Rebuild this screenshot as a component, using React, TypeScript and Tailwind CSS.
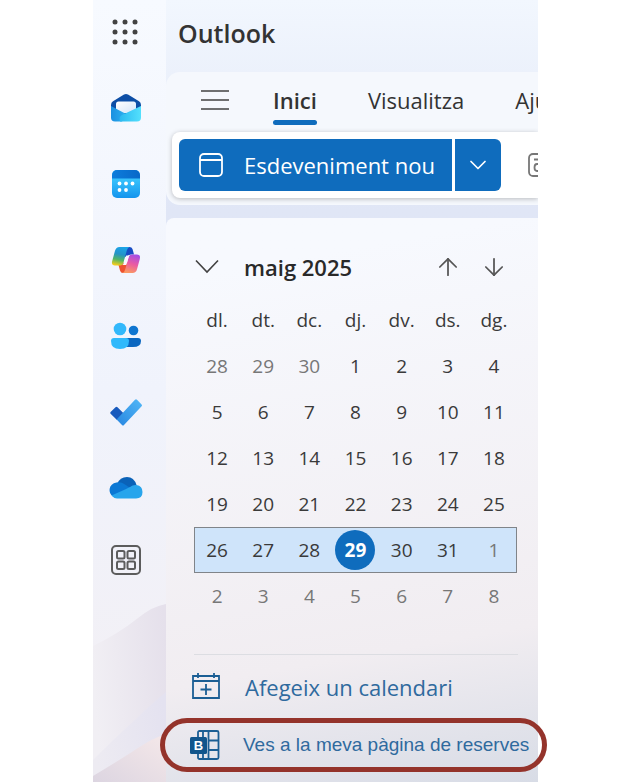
import { ArrowDown, ArrowUp, ChevronDown } from 'lucide-react'

const weekdays = ['dl.', 'dt.', 'dc.', 'dj.', 'dv.', 'ds.', 'dg.']

const weeks = [
  [28, 29, 30, 1, 2, 3, 4],
  [5, 6, 7, 8, 9, 10, 11],
  [12, 13, 14, 15, 16, 17, 18],
  [19, 20, 21, 22, 23, 24, 25],
  [26, 27, 28, 29, 30, 31, 1],
  [2, 3, 4, 5, 6, 7, 8],
]

const currentWeek = 4
const today = 29

function isOtherMonth(week: number, day: number) {
  return (week === 0 && day > 20) || (week >= 4 && day < 10)
}

function WaffleIcon() {
  return (
    <svg width="28" height="28" viewBox="0 0 28 28" fill="#424242">
      {[4, 14, 24].map((y) => [4, 14, 24].map((x) => <circle key={`${x}-${y}`} cx={x} cy={y} r="2.5" />))}
    </svg>
  )
}

function MailIcon() {
  return (
    <svg width="32" height="30" viewBox="0 0 32 30">
      <defs>
        <linearGradient id="mail-flap" x1="0" x2="1" y1="0" y2="0">
          <stop offset="0" stopColor="#1b8fe0" />
          <stop offset="1" stopColor="#2fb4f2" />
        </linearGradient>
        <linearGradient id="mail-front" x1="0" x2="1" y1="0" y2="0">
          <stop offset="0" stopColor="#2bb9f0" />
          <stop offset="1" stopColor="#54e0fd" />
        </linearGradient>
        <linearGradient id="mail-paper" x1="0" x2="1" y1="0" y2="1">
          <stop offset="0" stopColor="#ffffff" />
          <stop offset="1" stopColor="#d5e4f8" />
        </linearGradient>
      </defs>
      <path d="M1 12Q1 9.500 3 8.300L14 1.500Q16 .4 18 1.500L29 8.300Q31 9.500 31 12V16L16 24 1 16Z" fill="#0d4ea6" />
      <path d="M6 11Q6 8.500 8.500 8.500H23.500Q26 8.500 26 11V20H6Z" fill="url(#mail-paper)" />
      <path d="M1 13L17 21.500 12 28.500H5Q1 28.500 1 24.500Z" fill="url(#mail-flap)" />
      <path d="M31 13V24.500Q31 28.500 27 28.500H10Q8.500 23.500 12.500 21.800Z" fill="url(#mail-front)" />
    </svg>
  )
}

function CalendarIcon() {
  return (
    <svg width="28" height="28" viewBox="0 0 28 28">
      <defs>
        <linearGradient id="cal-body" x1="0" x2="0" y1="0" y2="1">
          <stop offset="0.2" stopColor="#3ecbff" />
          <stop offset="1" stopColor="#1494ed" />
        </linearGradient>
        <linearGradient id="cal-top" x1="0" x2="1" y1="0" y2="0">
          <stop offset="0" stopColor="#0d7ddc" />
          <stop offset="1" stopColor="#0868c8" />
        </linearGradient>
      </defs>
      <rect width="28" height="28" rx="5" fill="url(#cal-body)" />
      <path d="M0 8.500V5A5 5 0 0 1 5 0H23A5 5 0 0 1 28 5V8.500Z" fill="url(#cal-top)" />
      <g fill="#fff">
        <circle cx="7.500" cy="13.500" r="1.900" />
        <circle cx="14" cy="13.500" r="1.900" />
        <circle cx="20.500" cy="13.500" r="1.900" />
        <circle cx="7.500" cy="20" r="1.900" />
        <circle cx="14" cy="20" r="1.900" />
      </g>
    </svg>
  )
}

function CopilotIcon() {
  return (
    <svg width="30" height="28" viewBox="0 0 30 28">
      <defs>
        <linearGradient id="cop-left" x1="0.600" x2="0.400" y1="0" y2="1">
          <stop offset="0" stopColor="#1ba4e8" />
          <stop offset="0.400" stopColor="#2493c8" />
          <stop offset="0.700" stopColor="#52b565" />
          <stop offset="1" stopColor="#f2cc1d" />
        </linearGradient>
        <linearGradient id="cop-right" x1="0.700" x2="0.400" y1="0" y2="1">
          <stop offset="0" stopColor="#a34fe6" />
          <stop offset="0.500" stopColor="#ea5aa3" />
          <stop offset="1" stopColor="#fb9962" />
        </linearGradient>
      </defs>
      <path d="M14 1H18.500Q20.800 1 21.500 3L23 8.500H20Q17 8.500 16 11.500L13 10Z" fill="#174cc4" />
      <path d="M7.500 19L9 24.500Q9.700 27 12 27H15L17 18 12.500 16.500Q11.800 19 9.500 19Z" fill="#ee5330" />
      <path d="M8.500 1H18.500Q16.600 1.500 15.800 4.500L12.500 16.500Q11.700 19.500 9 19.500H4Q0 19.500 1.200 15L4 4.800Q5 1 8.500 1Z" fill="url(#cop-left)" />
      <path d="M21.500 27H11.500Q13.400 26.500 14.200 23.500L17.500 11.500Q18.300 8.500 21 8.500H26Q30 8.500 28.800 13L26 23.200Q25 27 21.500 27Z" fill="url(#cop-right)" />
      <path d="M15.200 9.500H18.500Q17.800 10.300 17.400 11.700L15.200 19H11.900Q12.400 18 12.700 17Z" fill="#fbf6fd" />
    </svg>
  )
}

function PeopleIcon() {
  return (
    <svg width="32" height="28" viewBox="0 0 32 28">
      <circle cx="23.500" cy="8.500" r="4.800" fill="#0f75d0" />
      <path d="M15 16H28Q31 16 31 19 31 25 23 25H16Z" fill="#0b67c0" />
      <circle cx="10" cy="7" r="6.300" fill="#32b8fb" />
      <path d="M4 16H16Q19 16 19 19 19 27 10 27 1 27 1 19 1 16 4 16Z" fill="#30b9fb" />
    </svg>
  )
}

function TodoIcon() {
  return (
    <svg width="34" height="28" viewBox="0 0 34 28">
      <defs>
        <linearGradient id="todo" x1="0" x2="1" y1="1" y2="0">
          <stop offset="0" stopColor="#2886e0" />
          <stop offset="1" stopColor="#52b8f7" />
        </linearGradient>
      </defs>
      <path d="M1.600 14L6.500 9.200Q7.500 8.200 8.500 9.200L15 15.700 8 22 1.600 15.800Q.8 14.900 1.600 14Z" fill="#185abd" />
      <path d="M7.600 21.500L26 1.800Q27 .8 28 1.800L32.600 6.400Q33.500 7.300 32.600 8.300L15 27Q14 28 13 27Z" fill="url(#todo)" />
    </svg>
  )
}

function OneDriveIcon() {
  return (
    <svg width="34" height="24" viewBox="0 0 34 24">
      <path d="M8 8Q11 1 18 1 25 1 27.500 9L18 14Z" fill="#0a62b8" />
      <path d="M7.500 6.500Q12 5.500 16 8.500L22 12.500 4 20.500Q0 18 .6 13 1.500 7.500 7.500 6.500Z" fill="#0b78d4" />
      <path d="M16 13.500L21 11Q24 8.500 27.500 9 33.500 10 33.500 16 33.500 22.500 27 22.500H8Q5 22.500 2.500 19.500Z" fill="#28a5ec" />
    </svg>
  )
}

function AppsIcon() {
  return (
    <svg width="32" height="32" viewBox="0 0 32 32" fill="none" stroke="#5c5c5c" strokeWidth="2">
      <rect x="2" y="2" width="28" height="28" rx="4" />
      <rect x="7" y="7" width="7.500" height="7.500" rx="1.500" />
      <rect x="17.500" y="7" width="7.500" height="7.500" rx="1.500" />
      <rect x="7" y="17.500" width="7.500" height="7.500" rx="1.500" />
      <rect x="17.500" y="17.500" width="7.500" height="7.500" rx="1.500" />
    </svg>
  )
}

function EventIcon() {
  return (
    <svg width="26" height="26" viewBox="0 0 26 26" fill="none" stroke="currentColor" strokeWidth="1.800">
      <rect x="2" y="2" width="22" height="22" rx="4" />
      <path d="M2 8H24" />
    </svg>
  )
}

function SaveIcon() {
  return (
    <svg width="26" height="26" viewBox="0 0 26 26" fill="none" stroke="#777" strokeWidth="1.800">
      <rect x="2" y="2" width="22" height="22" rx="4" />
      <path d="M7 7.500H19M18 12H10Q7.500 12 7.500 15.500 7.500 19 10 19H18" />
    </svg>
  )
}

function AddCalendarIcon() {
  return (
    <svg className="shrink-0" width="28" height="28" viewBox="0 0 28 28" fill="none" stroke="#1b5e94" strokeWidth="1.800">
      <path d="M1 3H27V25H1ZM1 8H27M6 0V5M22 0V5M14 11V22M8.500 16.500H19.500" />
    </svg>
  )
}

function BookingsIcon() {
  return (
    <svg className="shrink-0" width="30" height="30" viewBox="0 0 30 30">
      <g fill="none" stroke="#1b5e94" strokeWidth="1.800">
        <rect x="8" y="1" width="20.500" height="28" rx="1.500" />
        <path d="M13 1V29M18.500 1V29M18.500 10.500H28.500M18.500 20H28.500" />
      </g>
      <rect x="0" y="7" width="17" height="17" rx="1.500" fill="#11558c" />
      <text x="8.500" y="20" textAnchor="middle" fontSize="13" fontWeight="700" fontFamily="Liberation Sans, sans-serif" fill="#fff">
        B
      </text>
    </svg>
  )
}

const apps = [
  { label: 'Correu', icon: <MailIcon /> },
  { label: 'Calendari', icon: <CalendarIcon /> },
  { label: 'Copilot', icon: <CopilotIcon /> },
  { label: 'Persones', icon: <PeopleIcon /> },
  { label: 'To Do', icon: <TodoIcon /> },
  { label: 'OneDrive', icon: <OneDriveIcon /> },
]

function AppRail() {
  return (
    <nav className="relative flex w-[73px] shrink-0 flex-col bg-linear-to-b from-[#f7faff] via-[#f0f3fc] via-50% to-[#f3eff3]">
      {/* Wallpaper hills at the foot of the rail */}
      <svg className="absolute bottom-0 left-0 h-[182px] w-full" viewBox="0 0 73 182" preserveAspectRatio="none">
        <defs>
          <linearGradient id="hill" x1="0" x2="1" y1="0.400" y2="0.200">
            <stop offset="0" stopColor="#f1eff4" />
            <stop offset="1" stopColor="#e5e0eb" />
          </linearGradient>
          <linearGradient id="slope" x1="0" x2="1" y1="0.500" y2="0.300">
            <stop offset="0" stopColor="#edebf2" />
            <stop offset="1" stopColor="#e4e2f0" />
          </linearGradient>
          <linearGradient id="dune" x1="0" x2="1" y1="1" y2="0">
            <stop offset="0" stopColor="#dcd5e1" />
            <stop offset="1" stopColor="#f5e8e9" />
          </linearGradient>
        </defs>
        <path d="M0 46Q25 34 45 18 60 6 73 4V182H0Z" fill="url(#hill)" />
        <path d="M0 160Q24 136 42 120 58 104 73 92V182H0Z" fill="url(#slope)" />
        <path d="M0 176Q30 158 45 148 60 138 73 134V182H0Z" fill="url(#dune)" />
      </svg>
      <button aria-label="Iniciador d'aplicacions" className="relative flex h-[70px] items-center justify-center pr-2.5 pb-1.5">
        <WaffleIcon />
      </button>
      {apps.map((app) => (
        <button key={app.label} aria-label={app.label} className="relative flex h-[76px] items-center justify-center pr-2">
          {app.icon}
        </button>
      ))}
      <button aria-label="Més aplicacions" className="relative flex h-[68px] items-center justify-center pr-2">
        <AppsIcon />
      </button>
    </nav>
  )
}

function Ribbon() {
  return (
    <div className="overflow-hidden rounded-l-[14px] bg-[#f5f8fd] pb-[7px] pl-1.5 whitespace-nowrap text-[#333]">
      <div className="flex h-[60px] items-start pt-2 pl-7">
        <button aria-label="Menú" className="flex h-10 w-[30px] items-center justify-center">
          <svg width="30" height="22" viewBox="0 0 30 22" stroke="#424242" strokeWidth="1.600">
            <path d="M1 2H29M1 11H29M1 20H29" />
          </svg>
        </button>
        <div role="tablist" className="ml-[43px] flex gap-[51px] text-[22px] leading-10">
          <button role="tab" aria-selected="true" className="flex flex-col font-semibold">
            Inici
            <span className="h-[5px] w-full rounded-full bg-[#0f6cbd]" />
          </button>
          <button role="tab" aria-selected="false" className="flex">Visualitza</button>
          <button role="tab" aria-selected="false" className="flex">Ajuda</button>
        </div>
      </div>
      <div className="flex h-[66px] items-center rounded-l-lg bg-white pl-[7px] shadow-[0_1px_5px_rgba(0,0,0,0.25)]">
        <button className="flex h-[52px] w-[273px] shrink-0 items-center gap-5 rounded-l-md bg-[#0f6cbd] pl-[19px] text-[22px] text-white">
          <EventIcon />
          Esdeveniment nou
        </button>
        <button aria-label="Més opcions" className="ml-[3px] flex h-[52px] w-[46px] shrink-0 items-center justify-center rounded-r-md bg-[#0f6cbd] text-white">
          <ChevronDown size={28} strokeWidth={1.5} />
        </button>
        <button aria-label="Desa" className="ml-[26px] shrink-0">
          <SaveIcon />
        </button>
      </div>
    </div>
  )
}

function MonthPicker() {
  return (
    <section className="w-[323px]">
      <div className="mb-2 flex h-11 items-center">
        <button aria-label="Redueix" className="mr-6 flex justify-center">
          <svg width="26" height="16" viewBox="0 0 26 16" fill="none" stroke="#424242" strokeWidth="1.600">
            <path d="M2 1.500L13 13 24 1.500" />
          </svg>
        </button>
        <h2 className="flex-1 text-[22px] font-semibold text-[#292929]">maig 2025</h2>
        <button aria-label="Mes anterior" className="flex w-[46px] justify-center text-[#555]">
          <ArrowUp size={28} strokeWidth={1.5} />
        </button>
        <button aria-label="Mes següent" className="flex w-[46px] justify-center text-[#555]">
          <ArrowDown size={28} strokeWidth={1.5} />
        </button>
      </div>
      <table className="w-full table-fixed border-collapse text-center text-[19px] text-[#3a3a3a]">
        <thead>
          <tr className="h-[46px]">
            {weekdays.map((day) => (
              <th key={day} className="p-0 font-normal">{day}</th>
            ))}
          </tr>
        </thead>
        <tbody>
          {weeks.map((week, i) => (
            <tr key={i} className={i === currentWeek ? 'h-[46px] bg-[#cfe4fa] outline outline-1 -outline-offset-1 outline-[#808489]' : 'h-[46px]'}>
              {week.map((day) => (
                <td key={day} className="p-0">
                  {i === currentWeek && day === today ? (
                    <button aria-current="date" className="mx-auto flex size-10 items-center justify-center rounded-full bg-[#0f6cbd] font-bold text-white">
                      {day}
                    </button>
                  ) : (
                    <button className={isOtherMonth(i, day) ? 'text-[#777]' : ''}>{day}</button>
                  )}
                </td>
              ))}
            </tr>
          ))}
        </tbody>
      </table>
    </section>
  )
}

export default function App() {
  return (
    <div className="min-h-screen bg-white px-[93px] font-['Open_Sans','Noto_Sans',sans-serif]">
      <div className="flex min-h-screen">
        <AppRail />
        <main className="flex min-w-0 flex-1 flex-col bg-linear-to-b from-[#f2f7fe] via-[#e0e6f6] via-[210px] to-[#eae6ef]">
          <header className="flex h-[72px] items-center pb-1 pl-3">
            <h1 className="text-[25px] font-semibold text-[#333]">Outlook</h1>
          </header>
          <Ribbon />
          <aside className="mt-[13px] flex-1 rounded-tl-lg bg-linear-170 from-[#f7f9fe] from-10% via-[#f1edf1] via-75% to-[#d8dce6] pt-[27px] pr-5 pl-7">
            <MonthPicker />
            <div className="mt-[35px] border-t border-[#dcdde2] pt-[3px] text-[#2f6a9e]">
              <a href="#afegeix" className="-ml-0.5 flex h-[58px] items-center gap-[25px] text-[22px] whitespace-nowrap">
                <AddCalendarIcon />
                Afegeix un calendari
              </a>
              <a href="#reserves" className="relative -ml-1 flex h-[58px] items-center gap-[23px] font-['Liberation_Sans',sans-serif] text-[19px] whitespace-nowrap">
                <BookingsIcon />
                Ves a la meva pàgina de reserves
                <span className="absolute inset-y-0.5 -right-[29px] -left-[30px] rounded-full border-[5px] border-[#94332b]" />
              </a>
            </div>
          </aside>
        </main>
      </div>
    </div>
  )
}
